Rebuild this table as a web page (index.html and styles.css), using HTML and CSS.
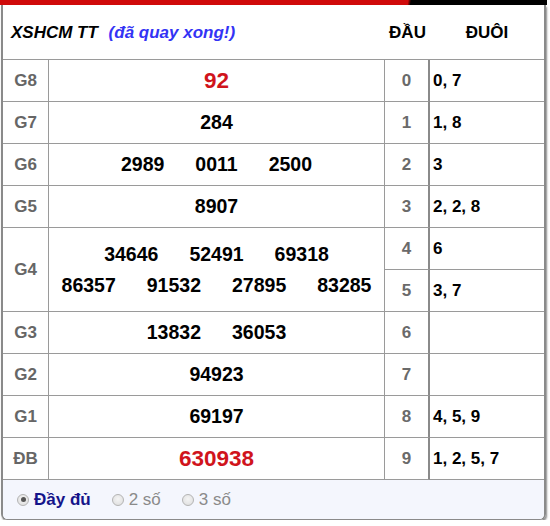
FILE: index.html
```html
<!DOCTYPE html>
<html lang="vi">
<head>
<meta charset="utf-8">
<title>XSHCM</title>
<link rel="stylesheet" href="styles.css">
</head>
<body>
<div class="wrap">
  <div class="topbar"></div>
  <div class="box">
    <div class="grid">
      <div class="title">XSHCM TT <span class="status">(đã quay xong!)</span></div>
      <div class="hd">ĐẦU</div>
      <div class="hd">ĐUÔI</div>

      <div class="lbl">G8</div>
      <div class="num"><span class="red">92</span></div>
      <div class="dau">0</div>
      <div class="duoi">0, 7</div>

      <div class="lbl">G7</div>
      <div class="num"><span>284</span></div>
      <div class="dau">1</div>
      <div class="duoi">1, 8</div>

      <div class="lbl">G6</div>
      <div class="num"><span>2989</span><span>0011</span><span>2500</span></div>
      <div class="dau">2</div>
      <div class="duoi">3</div>

      <div class="lbl">G5</div>
      <div class="num"><span>8907</span></div>
      <div class="dau">3</div>
      <div class="duoi">2, 2, 8</div>

      <div class="lbl tall">G4</div>
      <div class="num tall multi">
        <div class="line"><span>34646</span><span>52491</span><span>69318</span></div>
        <div class="line"><span>86357</span><span>91532</span><span>27895</span><span>83285</span></div>
      </div>
      <div class="dau">4</div>
      <div class="duoi">6</div>
      <div class="dau">5</div>
      <div class="duoi">3, 7</div>

      <div class="lbl">G3</div>
      <div class="num"><span>13832</span><span>36053</span></div>
      <div class="dau">6</div>
      <div class="duoi"></div>

      <div class="lbl">G2</div>
      <div class="num"><span>94923</span></div>
      <div class="dau">7</div>
      <div class="duoi"></div>

      <div class="lbl">G1</div>
      <div class="num"><span>69197</span></div>
      <div class="dau">8</div>
      <div class="duoi">4, 5, 9</div>

      <div class="lbl">ĐB</div>
      <div class="num"><span class="red">630938</span></div>
      <div class="dau">9</div>
      <div class="duoi">1, 2, 5, 7</div>
    </div>
    <div class="footer">
      <label class="opt on"><span class="radio"></span><span class="txt">Đầy đủ</span></label>
      <label class="opt"><span class="radio"></span><span class="txt">2 số</span></label>
      <label class="opt"><span class="radio"></span><span class="txt">3 số</span></label>
    </div>
  </div>
</div>
</body>
</html>
```

FILE: styles.css
```css
html, body {
  margin: 0;
  padding: 0;
  background: #fff;
}

body {
  font-family: "Liberation Sans", Arial, sans-serif;
  color: #000;
}

.wrap {
  width: 547px;
}

.topbar {
  height: 5px;
  background: linear-gradient(100deg, #d00a0a 0, #d00a0a 402px, #000 405px, #000 100%);
}

.box {
  margin-left: 1px;
  width: 541px;
  border-left: 2px solid #8a8a8a;
  border-right: 2px solid #8a8a8a;
  border-bottom: 1px solid #8a8a8a;
  border-radius: 0 0 6px 6px;
  box-shadow: 1px 2px 2px rgba(0, 0, 0, 0.45);
  overflow: hidden;
}

.grid {
  display: grid;
  grid-template-columns: 46px 336px 45px 114px;
  grid-template-rows: 55px repeat(10, 42px);
}

.grid > div {
  box-sizing: border-box;
  border-bottom: 1px solid #9a9a9a;
  display: flex;
  align-items: center;
}

.title {
  grid-column: span 2;
  padding-left: 8px;
  padding-top: 2px;
  font-size: 17px;
  font-weight: bold;
  font-style: italic;
  white-space: pre;
}

.status {
  color: #3333f5;
  margin-left: 6px;
}

.hd {
  justify-content: center;
  padding-top: 2px;
  font-size: 17px;
  font-weight: bold;
}

.lbl {
  justify-content: center;
  border-right: 1px solid #9a9a9a;
  color: #666;
  font-weight: bold;
  font-size: 17px;
}

.num {
  justify-content: center;
  gap: 31px;
  border-right: 1px solid #9a9a9a;
  font-weight: bold;
  font-size: 19.5px;
}

.tall {
  grid-row: span 2;
}

.multi {
  flex-direction: column;
  gap: 8px;
}

.line {
  display: flex;
  justify-content: center;
  gap: 31px;
}

.red {
  color: #d0141c;
  font-size: 22.5px;
}

.dau {
  justify-content: center;
  border-right: 2px solid #8a8a8a;
  color: #6a6a6a;
  font-weight: bold;
  font-size: 17px;
}

.duoi {
  padding-left: 3px;
  font-weight: bold;
  font-size: 17px;
}

.footer {
  height: 39px;
  background: #f4f6fd;
  display: flex;
  align-items: center;
  padding-left: 14px;
  gap: 21px;
}

.opt {
  display: flex;
  align-items: center;
  gap: 5px;
  font-size: 17px;
  color: #8a8a8a;
}

.opt.on {
  color: #14148a;
  font-weight: bold;
}

.radio {
  width: 10px;
  height: 10px;
  border-radius: 50%;
  border: 1px solid #b4b4b4;
  background: radial-gradient(circle at 50% 40%, #f4f4f4 0, #dcdcdc 100%);
  display: flex;
  align-items: center;
  justify-content: center;
}

.opt.on .radio::after {
  content: "";
  width: 5px;
  height: 5px;
  border-radius: 50%;
  background: #555;
}
```
